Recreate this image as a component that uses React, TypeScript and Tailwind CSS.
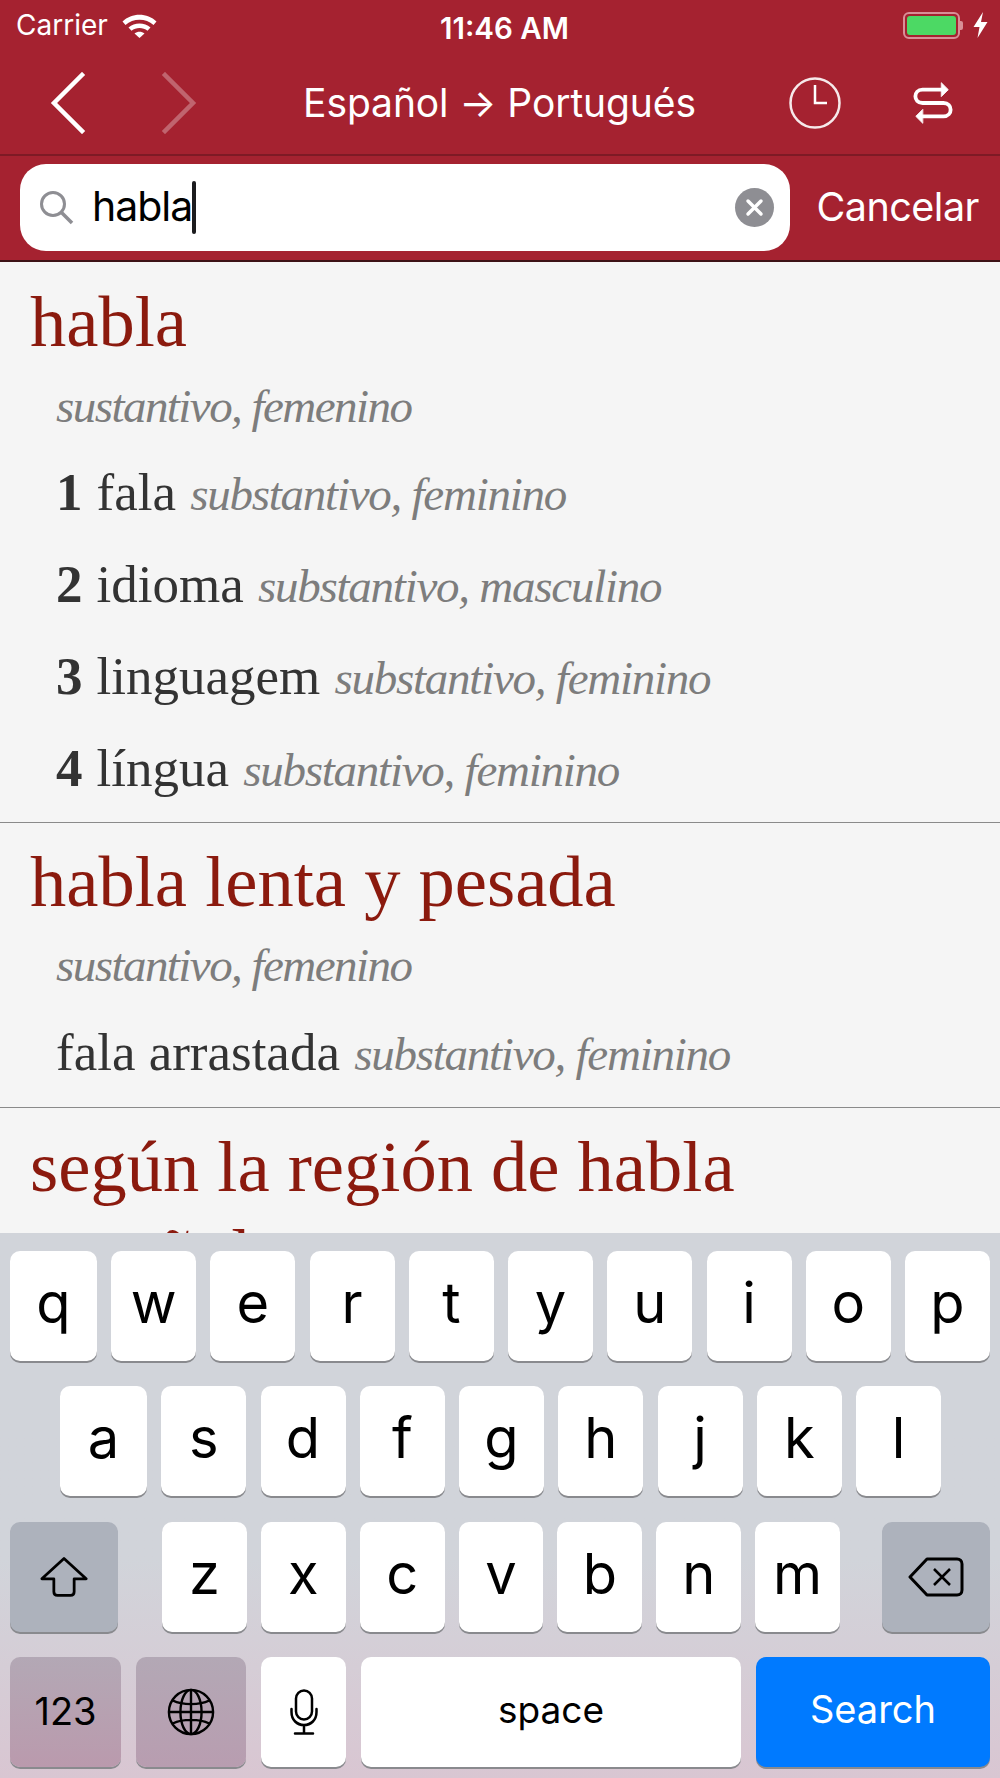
import React from 'react';

const ROW_ONE = ['w', 'e', 'r', 't', 'y', 'u', 'i', 'o', 'p'];
const ROW_TWO = ['s', 'd', 'f', 'g', 'h', 'j', 'k', 'l'];
const ROW_THREE = ['z', 'x', 'c', 'v', 'b', 'n', 'm'];

const Key = ({ label, className = '' }: { label: string; className?: string }) => (
  <div className={`h-[110px] rounded-[10px] bg-white shadow-[0_2px_0_#898a8e] flex items-center justify-center text-[56px] pb-[6px] text-black ${className}`}>
    {label}
  </div>
);

const Sense = ({ n, word, gram }: { n?: number; word: string; gram: string }) => (
  <div className="h-[92px] leading-[92px] text-[53px] text-[#333333] whitespace-nowrap">
    {n && <b className="mr-[14px]">{n}</b>}
    {word} <i className="ml-[1px] text-[#7d7d7d] text-[47px] tracking-[-1.25px]">{gram}</i>
  </div>
);

const Headword = ({ children, className = '' }: { children: React.ReactNode; className?: string }) => (
  <h2 className={`text-[72.5px] leading-[84px] text-[#8b1a0e] ${className}`}>{children}</h2>
);

const Gram = ({ children }: { children: React.ReactNode }) => (
  <p className="mt-[13.5px] mb-[12.5px] h-[56px] leading-[56px] text-[47px] italic tracking-[-1.55px] text-[#7d7d7d]">{children}</p>
);

export default function App() {
  return (
    <div className="w-[1000px] h-[1778px] flex flex-col overflow-hidden font-['Inter',sans-serif] bg-[#f5f5f5]">
      <header className="bg-[#a52230] text-white shrink-0">
        <div className="h-[50px] pl-[16px] pr-[12px] flex items-center justify-between relative text-[28px]">
          <div className="flex items-center gap-[14px]">
            <span>Carrier</span>
            <svg width="35" height="26" viewBox="0 0 35 26" fill="white">
              <path d="M0.5 9.5C9.5 0.5 25.5 0.5 34.5 9.5L31.5 13C24 6 11 6 3.5 13Z" />
              <path d="M6.5 15.5C12.5 10 22.5 10 28.5 15.5L25.5 18.8C21 15.2 14 15.2 9.5 18.8Z" />
              <path d="M12.5 21.5C15.5 19.2 19.5 19.2 22.5 21.5L17.5 26Z" />
            </svg>
          </div>
          <span className="absolute left-[440px] top-[6px] font-semibold text-[29.5px]">11:46 AM</span>
          <div className="flex items-center gap-[10px]">
            <div className="flex items-center">
              <div className="w-[57px] h-[27px] rounded-[6px] border-[2px] border-[#d98f97] p-[2px]">
                <div className="w-full h-full rounded-[3px] bg-[#4cd964]" />
              </div>
              <div className="w-[3px] h-[9px] bg-[#d98f97] rounded-r-[2px]" />
            </div>
            <svg width="15" height="26" viewBox="0 0 15 26" fill="white">
              <path d="M10 0L0.5 15H6.5L4.5 26L14.5 10H8Z" />
            </svg>
          </div>
        </div>
        <div className="h-[106px] pt-[2px] pl-[50px] pr-[47px] flex items-center border-b-[2px] border-[#7e1a25]">
          <svg width="36" height="62" viewBox="0 0 36 62" fill="none" stroke="white" strokeWidth="4.5" strokeLinecap="square">
            <path d="M32 3L4 31L32 59" />
          </svg>
          <svg width="36" height="62" viewBox="0 0 36 62" fill="none" stroke="white" strokeOpacity="0.3" strokeWidth="4.5" strokeLinecap="square" className="ml-[75px]">
            <path d="M4 3L32 31L4 59" />
          </svg>
          <div className="flex-1 text-center text-[39px] pl-[13px] tracking-[-0.1px] whitespace-nowrap">Español → Portugués</div>
          <svg width="52" height="52" viewBox="0 0 52 52" fill="none" stroke="white" strokeWidth="2.5" className="mr-[72px]">
            <circle cx="26" cy="26" r="24.5" strokeOpacity="0.9" />
            <path d="M26 8V26H38" />
          </svg>
          <svg width="40" height="44" viewBox="0 0 42 46" fill="none" stroke="white" strokeWidth="4" strokeLinecap="round">
            <path d="M32 9H10C0 9 0 23 10 23H32C42 23 42 37 32 37H8" />
            <path d="M30 2L37 9L30 16Z" strokeWidth="1" fill="white" />
            <path d="M10 30L3 37L10 44Z" strokeWidth="1" fill="white" />
          </svg>
        </div>
        <div className="h-[106px] pl-[20px] pr-[21px] flex items-center border-b-[2px] border-[#3d1216]">
          <div className="w-[770px] h-[87px] bg-white rounded-[26px] flex items-center pl-[19px] pr-[16px] mb-[2px]">
            <svg width="35" height="35" viewBox="0 0 35 35" fill="none" stroke="#8e8e93" strokeWidth="3">
              <circle cx="14" cy="14" r="11.5" />
              <path d="M22.5 22.5L33 33" strokeWidth="3.5" />
            </svg>
            <span className="ml-[18px] text-[41px] text-black tracking-[-1px]">habla</span>
            <span className="w-[4px] h-[53px] rounded-[2px] bg-[#1c1c1e]" />
            <span className="ml-auto w-[39px] h-[39px] rounded-full bg-[#8e8e93] flex items-center justify-center">
              <svg width="19" height="19" viewBox="0 0 19 19" stroke="white" strokeWidth="3.5" strokeLinecap="round">
                <path d="M3 3L16 16M16 3L3 16" />
              </svg>
            </span>
          </div>
          <span className="ml-auto text-[39.5px] tracking-[-0.5px]">Cancelar</span>
        </div>
      </header>

      <main className="flex-1 min-h-0 overflow-hidden font-['Liberation_Serif',serif] bg-[#f5f5f5]">
        <section className="pt-[18px] pb-[7.5px] pl-[30px] border-b-[1.5px] border-[#8a8a8a]">
          <Headword>habla</Headword>
          <div className="pl-[26px]">
            <Gram>sustantivo, femenino</Gram>
            <Sense n={1} word="fala" gram="substantivo, feminino" />
            <Sense n={2} word="idioma" gram="substantivo, masculino" />
            <Sense n={3} word="linguagem" gram="substantivo, feminino" />
            <Sense n={4} word="língua" gram="substantivo, feminino" />
          </div>
        </section>
        <section className="pt-[17px] pb-[9.5px] pl-[30px] border-b-[1.5px] border-[#8a8a8a]">
          <Headword>habla lenta y pesada</Headword>
          <div className="pl-[26px]">
            <Gram>sustantivo, femenino</Gram>
            <Sense word="fala arrastada" gram="substantivo, feminino" />
          </div>
        </section>
        <section className="pt-[15px] px-[30px]">
          <Headword className="leading-[88px]">según la región de habla española</Headword>
        </section>
      </main>

      <footer className="h-[545px] shrink-0 pt-[18px] bg-gradient-to-b from-[#d1d4da] from-60% to-[#d9c6d2] flex flex-col gap-[25.33px]">
        <div className="flex justify-between px-[10px]">
          <Key label="q" className="w-[87px]" />
          {ROW_ONE.map(k => <Key key={k} label={k} className="w-[85px]" />)}
        </div>
        <div className="flex justify-between pl-[60px] pr-[59px]">
          <Key label="a" className="w-[87px]" />
          {ROW_TWO.map(k => <Key key={k} label={k} className="w-[85px]" />)}
        </div>
        <div className="flex px-[10px]">
          <div className="w-[108px] h-[110px] rounded-[10px] bg-[#adb2bc] shadow-[0_2px_0_#898a8e] flex items-center justify-center">
            <svg width="48" height="42" viewBox="0 0 52 44" fill="none" stroke="black" strokeWidth="3" strokeLinejoin="round">
              <path d="M26 2L50 24H37V38C37 41 36 42 33 42H19C16 42 15 41 15 38V24H2Z" />
            </svg>
          </div>
          <div className="flex-1 flex gap-[14px] pl-[44px] pr-[42px]">
            {ROW_THREE.map(k => <Key key={k} label={k} className="flex-1" />)}
          </div>
          <div className="w-[108px] h-[110px] rounded-[10px] bg-[#adb2bc] shadow-[0_2px_0_#898a8e] flex items-center justify-center">
            <svg width="56" height="40" viewBox="0 0 56 40" fill="none" stroke="black" strokeWidth="3" strokeLinejoin="round">
              <path d="M19 2H49C52 2 54 4 54 7V33C54 36 52 38 49 38H19L2 20Z" />
              <path d="M26 12L42 28M42 12L26 28" strokeWidth="2.5" />
            </svg>
          </div>
        </div>
        <div className="flex gap-[15px] px-[10px]">
          <div className="w-[111px] h-[110px] rounded-[10px] bg-gradient-to-b from-[#b3a8b5] to-[#ba9aad] shadow-[0_2px_0_#898a8e] flex items-center justify-center text-[38px] text-black">123</div>
          <div className="w-[110px] h-[110px] rounded-[10px] bg-gradient-to-b from-[#b3a8b5] to-[#b89db0] shadow-[0_2px_0_#898a8e] flex items-center justify-center">
            <svg width="48" height="48" viewBox="0 0 50 50" fill="none" stroke="black" strokeWidth="2.5">
              <circle cx="25" cy="25" r="23" />
              <ellipse cx="25" cy="25" rx="11" ry="23" />
              <path d="M25 2V48M2 25H48M6 13C16 18 34 18 44 13M6 37C16 32 34 32 44 37" />
            </svg>
          </div>
          <div className="w-[85px] h-[110px] rounded-[10px] bg-white shadow-[0_2px_0_#898a8e] flex items-center justify-center">
            <svg width="28" height="46" viewBox="0 0 28 46" fill="none" stroke="black" strokeWidth="2.5" strokeLinecap="round">
              <rect x="6" y="1.5" width="16" height="29" rx="8" />
              <path d="M1.5 20V23C1.5 31 7 36 14 36C21 36 26.5 31 26.5 23V20M14 36V44M5 44.5H23" />
            </svg>
          </div>
          <div className="flex-1 h-[110px] pb-[4px] rounded-[10px] bg-white shadow-[0_2px_0_#898a8e] flex items-center justify-center text-[37px] text-black">space</div>
          <div className="w-[234px] h-[110px] pb-[4px] rounded-[10px] bg-[#007aff] shadow-[0_2px_0_#898a8e] flex items-center justify-center text-[38px] text-white">Search</div>
        </div>
      </footer>
    </div>
  );
}
